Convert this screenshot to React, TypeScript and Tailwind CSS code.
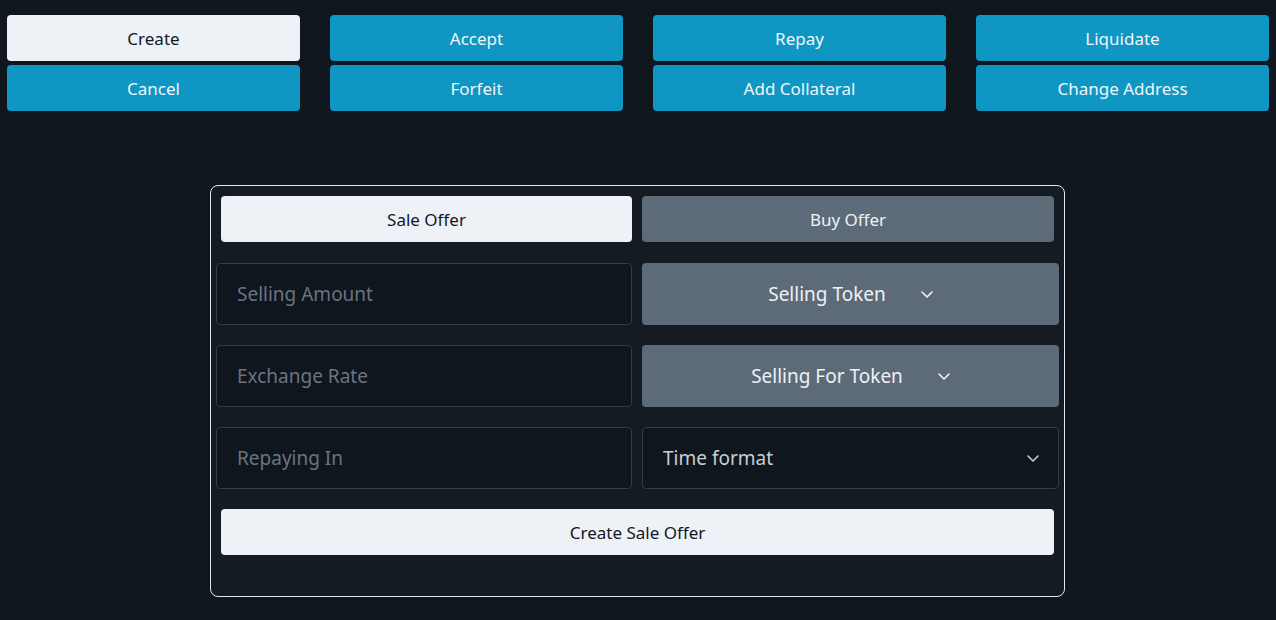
import { useState } from "react";

const actions = [
  ["Create", "Cancel"],
  ["Accept", "Forfeit"],
  ["Repay", "Add Collateral"],
  ["Liquidate", "Change Address"],
];

function Chevron({ className = "" }: { className?: string }) {
  return (
    <svg
      viewBox="0 0 12 7"
      className={`h-[7px] w-[12px] ${className}`}
      fill="none"
      stroke="currentColor"
      strokeWidth="1.6"
      strokeLinecap="round"
      strokeLinejoin="round"
    >
      <path d="M1 1l5 5 5-5" />
    </svg>
  );
}

export default function App() {
  const [active, setActive] = useState("Create");
  const [offer, setOffer] = useState<"sale" | "buy">("sale");

  return (
    <div
      className="min-h-screen w-full bg-[#10161d] text-[17px]"
      style={{ fontFamily: '"Noto Sans", sans-serif' }}
    >
      {/* Action buttons */}
      <div className="grid grid-cols-[repeat(4,293px)] gap-x-[30px] pl-[7px] pt-[15px]">
        {actions.map((col) => (
          <div key={col[0]} className="flex flex-col gap-[4px]">
            {col.map((label) => (
              <button
                key={label}
                type="button"
                onClick={() => setActive(label)}
                className={`h-[46px] rounded-[4px] pt-[1px] ${
                  active === label
                    ? "bg-[#eef1f5] text-[#111827]"
                    : "bg-[#0f96c3] text-[#eef6fa]"
                }`}
              >
                {label}
              </button>
            ))}
          </div>
        ))}
      </div>

      {/* Offer form card */}
      <div className="mt-[74px] flex justify-center pr-[1px]">
        <div className="w-[855px] rounded-[8px] border border-[#e5e7eb] bg-[#141b23] pl-[5px] pr-[5px] pt-[10px] pb-[41px]">
          <div className="grid grid-cols-[411px_412px] gap-x-[10px] px-[5px]">
            <button
              type="button"
              onClick={() => setOffer("sale")}
              className={`h-[46px] rounded-[4px] pt-[1px] ${
                offer === "sale" ? "bg-[#eef1f5] text-[#111827]" : "bg-[#5d6b78] text-[#eef1f5]"
              }`}
            >
              Sale Offer
            </button>
            <button
              type="button"
              onClick={() => setOffer("buy")}
              className={`h-[46px] rounded-[4px] pt-[1px] ${
                offer === "buy" ? "bg-[#eef1f5] text-[#111827]" : "bg-[#5d6b78] text-[#eef1f5]"
              }`}
            >
              Buy Offer
            </button>
          </div>

          <div className="mt-[21px] grid grid-cols-[416px_417px] gap-x-[10px] gap-y-[20px] text-[19px]">
            <input
              placeholder="Selling Amount"
              className="h-[62px] rounded-[4px] border border-[#343c46] bg-[#0f161d] px-[20px] text-[#e5e7eb] placeholder:text-[#6b7480] focus:outline-none"
            />
            <button
              type="button"
              className="flex h-[62px] items-center justify-center gap-[35px] rounded-[4px] bg-[#5d6b78] text-[#eef1f5]"
            >
              <span>Selling Token</span>
              <Chevron />
            </button>

            <input
              placeholder="Exchange Rate"
              className="h-[62px] rounded-[4px] border border-[#343c46] bg-[#0f161d] px-[20px] text-[#e5e7eb] placeholder:text-[#6b7480] focus:outline-none"
            />
            <button
              type="button"
              className="flex h-[62px] items-center justify-center gap-[35px] rounded-[4px] bg-[#5d6b78] text-[#eef1f5]"
            >
              <span>Selling For Token</span>
              <Chevron />
            </button>

            <input
              placeholder="Repaying In"
              className="h-[62px] rounded-[4px] border border-[#343c46] bg-[#0f161d] px-[20px] text-[#e5e7eb] placeholder:text-[#6b7480] focus:outline-none"
            />
            <button
              type="button"
              className="flex h-[62px] items-center justify-between rounded-[4px] border border-[#343c46] bg-[#0f161d] pl-[20px] pr-[19px] text-[#c9ced4]"
            >
              <span>Time format</span>
              <Chevron className="text-[#c9ced4]" />
            </button>
          </div>

          <div className="mt-[20px] px-[5px]">
            <button
              type="button"
              className="h-[46px] w-full rounded-[4px] pt-[1px] bg-[#eef1f5] text-[#111827]"
            >
              {offer === "sale" ? "Create Sale Offer" : "Create Buy Offer"}
            </button>
          </div>
        </div>
      </div>
    </div>
  );
}
